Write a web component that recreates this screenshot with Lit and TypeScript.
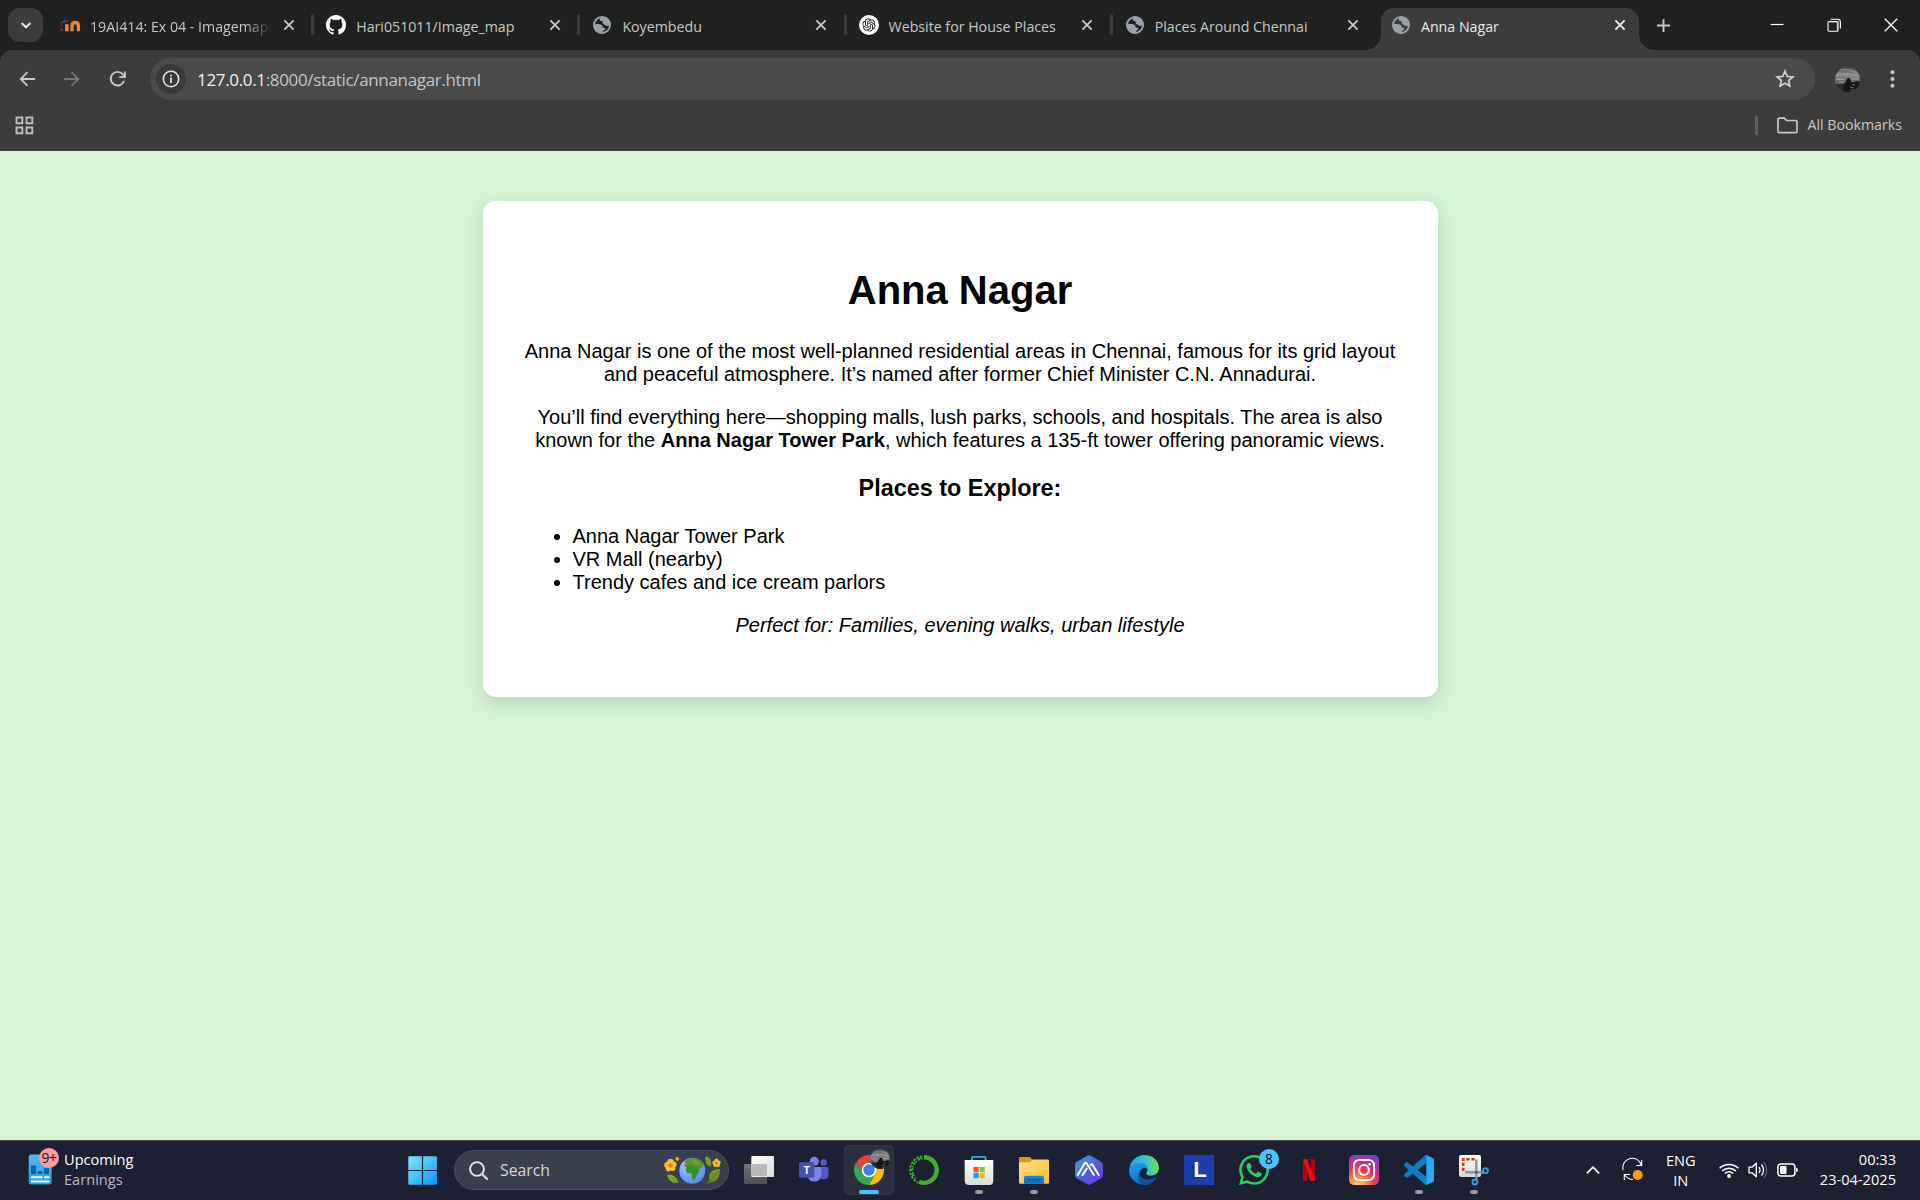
import { LitElement, html, css, svg, TemplateResult } from "lit";
import { customElement, property } from "lit/decorators.js";

const GITHUB =
  "M8 0C3.58 0 0 3.58 0 8c0 3.54 2.29 6.53 5.47 7.59.4.07.55-.17.55-.38 0-.19-.01-.82-.01-1.49-2.01.37-2.53-.49-2.69-.94-.09-.23-.48-.94-.82-1.13-.28-.15-.68-.52-.01-.53.63-.01 1.08.58 1.23.82.72 1.21 1.87.87 2.33.66.07-.52.28-.87.51-1.07-1.78-.2-3.64-.89-3.64-3.95 0-.87.31-1.59.82-2.15-.08-.2-.36-1.02.08-2.12 0 0 .67-.21 2.2.82.64-.18 1.32-.27 2-.27s1.36.09 2 .27c1.53-1.04 2.2-.82 2.2-.82.44 1.1.16 1.92.08 2.12.51.56.82 1.27.82 2.15 0 3.07-1.87 3.75-3.65 3.95.29.25.54.73.54 1.48 0 1.07-.01 1.93-.01 2.2 0 .21.15.46.55.38A8.01 8.01 0 0 0 16 8c0-4.42-3.58-8-8-8z";
const OPENAI =
  "M22.2819 9.8211a5.9847 5.9847 0 0 0-.5157-4.9108 6.0462 6.0462 0 0 0-6.5098-2.9A6.0651 6.0651 0 0 0 4.9807 4.1818a5.9847 5.9847 0 0 0-3.9977 2.9 6.0462 6.0462 0 0 0 .7427 7.0966 5.98 5.98 0 0 0 .511 4.9107 6.051 6.051 0 0 0 6.5146 2.9001A5.9847 5.9847 0 0 0 13.2599 24a6.0557 6.0557 0 0 0 5.7718-4.2058 5.9894 5.9894 0 0 0 3.9977-2.9001 6.0557 6.0557 0 0 0-.7475-7.0729zm-9.022 12.6081a4.4755 4.4755 0 0 1-2.8764-1.0408l.1419-.0804 4.7783-2.7582a.7948.7948 0 0 0 .3927-.6813v-6.7369l2.02 1.1686a.071.071 0 0 1 .038.052v5.5826a4.504 4.504 0 0 1-4.4945 4.4944zm-9.6607-4.1254a4.4708 4.4708 0 0 1-.5346-3.0137l.142.0852 4.783 2.7582a.7712.7712 0 0 0 .7806 0l5.8428-3.3685v2.3324a.0804.0804 0 0 1-.0332.0615L9.74 19.9502a4.4992 4.4992 0 0 1-6.1408-1.6464zM2.3408 7.8956a4.485 4.485 0 0 1 2.3655-1.9728V11.6a.7664.7664 0 0 0 .3879.6765l5.8144 3.3543-2.0201 1.1685a.0757.0757 0 0 1-.071 0l-4.8303-2.7865A4.504 4.504 0 0 1 2.3408 7.872zm16.5963 3.8558L13.1038 8.364 15.1192 7.2a.0757.0757 0 0 1 .071 0l4.8303 2.7913a4.4944 4.4944 0 0 1-.6765 8.1042v-5.6772a.79.79 0 0 0-.407-.667zm2.0107-3.0231l-.142-.0852-4.7735-2.7818a.7759.7759 0 0 0-.7854 0L9.409 9.2297V6.8974a.0662.0662 0 0 1 .0284-.0615l4.8303-2.7866a4.4992 4.4992 0 0 1 6.6802 4.66zM8.3065 12.863l-2.02-1.1638a.0804.0804 0 0 1-.038-.0567V6.0742a4.4992 4.4992 0 0 1 7.3757-3.4537l-.142.0805L8.704 5.459a.7948.7948 0 0 0-.3927.6813zm1.0976-2.3654l2.602-1.4998 2.6069 1.4998v2.9994l-2.5974 1.4997-2.6067-1.4997Z";
const WHATSAPP =
  "M17.472 14.382c-.297-.149-1.758-.867-2.03-.967-.273-.099-.471-.148-.67.15-.197.297-.767.966-.94 1.164-.173.199-.347.223-.644.075-.297-.15-1.255-.463-2.39-1.475-.883-.788-1.48-1.761-1.653-2.059-.173-.297-.018-.458.13-.606.134-.133.298-.347.446-.52.149-.174.198-.298.298-.497.099-.198.05-.371-.025-.52-.075-.149-.669-1.612-.916-2.207-.242-.579-.487-.5-.669-.51-.173-.008-.371-.01-.57-.01-.198 0-.52.074-.792.372-.272.297-1.04 1.016-1.04 2.479 0 1.462 1.065 2.875 1.213 3.074.149.198 2.096 3.2 5.077 4.487.709.306 1.262.489 1.694.625.712.227 1.36.195 1.871.118.571-.085 1.758-.719 2.006-1.413.248-.694.248-1.289.173-1.413-.074-.124-.272-.198-.57-.347m-5.421 7.403h-.004a9.87 9.87 0 01-5.031-1.378l-.361-.214-3.741.982.998-3.648-.235-.374a9.86 9.86 0 01-1.51-5.26c.001-5.45 4.436-9.884 9.888-9.884 2.64 0 5.122 1.03 6.988 2.898a9.825 9.825 0 012.893 6.994c-.003 5.45-4.437 9.884-9.885 9.884m8.413-18.297A11.815 11.815 0 0012.05 0C5.495 0 .16 5.335.157 11.892c0 2.096.547 4.142 1.588 5.945L.057 24l6.305-1.654a11.882 11.882 0 005.683 1.448h.005c6.554 0 11.89-5.335 11.893-11.893a11.821 11.821 0 00-3.48-8.413Z";
const VSCODE =
  "M23.15 2.587L18.21.21a1.494 1.494 0 0 0-1.705.29l-9.46 8.63-4.12-3.128a.999.999 0 0 0-1.276.057L.327 7.261A1 1 0 0 0 .326 8.74L3.899 12 .326 15.26a1 1 0 0 0 .001 1.479L1.65 17.94a.999.999 0 0 0 1.276.057l4.12-3.128 9.46 8.63a1.492 1.492 0 0 0 1.704.29l4.942-2.377A1.5 1.5 0 0 0 24 20.06V3.939a1.5 1.5 0 0 0-.85-1.352zm-5.146 14.861L10.826 12l7.178-5.448v10.896z";

const icon = (w: number, h: number, body: unknown, vb = `0 0 ${w} ${h}`) =>
  html`<svg width=${w} height=${h} viewBox=${vb} fill="none">${body}</svg>`;

/* ---------- favicons ---------- */
const favicons: Record<string, () => TemplateResult> = {
  moodle: () =>
    icon(20, 20, svg`
      <path d="M1.600 16v-2.500" stroke="#7a3f20" stroke-width="2.400"/>
      <path d="M6.800 16.300V9.200" stroke="#f08427" stroke-width="3.600"/>
      <path d="M12 16.300v-5.200q0-3.600 3.200-3.600t3.200 3.600v5.200" stroke="#f08427" stroke-width="3.300"/>
      <path d="M0 7.400 5.500 4.400 9.300 5.200 5.600 7.400 2 8.400z" fill="#4b4340"/>
      <path d="M1.400 8v4" stroke="#57463c" stroke-width=".9"/>`),
  github: () => icon(20, 20, svg`<path d=${GITHUB} fill="#fff"/>`, "0 0 16 16"),
  globe: () =>
    icon(20, 20, svg`
      <circle cx="10" cy="10" r="8" stroke="#9aa1a9" stroke-width="2"/>
      <path d="M9.500 2C8.300 2.700 7.600 3.600 7.700 4.700c.1.900 1 1.300 2 1.300.9 0 1 .7.9 1.500-.1.900.6 1.500 1.300 1.700 1 .4 1.300 1.500 2.600 1.500l4 .300C19 4.600 15.400 1 9.500 2z" fill="#9aa1a9"/>
      <path d="M1.500 8.900h4.800c2.200 0 4.200.8 4.200 2.600 0 1.100.9 1.300 2 1.500 1.200.2 1.300 1.200.3 1.800-1 .5-1.700.7-1.700 1.800v1.900C5.600 19 1 15.600 1.500 8.900z" fill="#9aa1a9"/>`),
  openai: () =>
    icon(20, 20, svg`<circle cx="10" cy="10" r="10" fill="#fff"/><g transform="translate(3.400 3.400) scale(.55)"><path d=${OPENAI} fill="#111"/></g>`),
};

/* ---------- taskbar app icons, drawn on a 30px grid ---------- */
const avatar = (size: number) =>
  icon(size, size, svg`
    <defs>
      <clipPath id="av"><circle cx="12.500" cy="12.500" r="12.500"/></clipPath>
      <linearGradient id="avg" x1="0" y1="0" x2="0" y2="1"><stop offset="0" stop-color="#4c4c4c"/><stop offset=".3" stop-color="#8b8b8b"/><stop offset=".55" stop-color="#6d6d6d"/><stop offset="1" stop-color="#2b2b2b"/></linearGradient>
    </defs>
    <g clip-path="url(#av)">
      <rect width="25" height="25" fill="url(#avg)"/>
      <path d="M0 4q6-3 13-1t12 2M1 8.500q8-3 14-1t10 0" stroke="#a9a9a9" stroke-width="1" opacity=".6"/>
      <path d="M2 12.500h7M15 12h8M4 15h5" stroke="#a5a5a5" stroke-width="1"/>
      <path d="M0 17h25v8H0z" fill="#2b2b2b"/>
      <path d="M9 25c-2-4-1-8 1-9 1-1 .8-2.500 2-4 .6-1.500 3-1.500 3.500 0 .6 1.300.5 2.600 1 3.500l6-1.500 3 1v10z" fill="#161616"/>
      <path d="M15 20l4 1M17 17.500l3 .5M15 23h4" stroke="#777" stroke-width=".8"/>
    </g>`, "0 0 25 25");

const apps: Record<string, () => TemplateResult> = {
  taskview: () =>
    icon(30, 30, svg`
      <defs><linearGradient id="tv" x1="0" y1="0" x2="1" y2="1"><stop offset="0" stop-color="#fff"/><stop offset="1" stop-color="#dcdcdc"/></linearGradient>
      <linearGradient id="tv2" x1="0" y1="0" x2="0" y2="1"><stop offset="0" stop-color="#747474"/><stop offset="1" stop-color="#505050"/></linearGradient></defs>
      <rect x="0" y="9" width="23" height="20" rx="1" fill="url(#tv2)"/>
      <rect x="7.300" y="1" width="22.700" height="21" rx="1" fill="url(#tv)"/>
      <path d="M7.300 9H22a1 1 0 0 1 1 1v11H7.300z" fill="#b9b9b9"/>`),
  teams: () =>
    icon(30, 30, svg`
      <circle cx="24.700" cy="7.400" r="3.200" fill="#5059c9"/>
      <path d="M20 12h8.500q1 0 1 1v6.500a4.800 4.800 0 0 1-9.500 1z" fill="#5059c9"/>
      <circle cx="15.300" cy="6.200" r="4.500" fill="#7b83eb"/>
      <path d="M8.500 12h12.300q1.400 0 1.400 1.400V21a7 7 0 0 1-13.700 0z" fill="#7b83eb"/>
      <rect x="0" y="7.300" width="15.300" height="15.400" rx="1.400" fill="#4650b8"/>
      <text x="7.650" y="19" font-size="11" font-weight="700" text-anchor="middle" fill="#fff" font-family="Open Sans, sans-serif">T</text>`),
  chrome: () =>
    icon(30, 30, svg`
      <path d="M2 7.500A15 15 0 0 0 15 30l6.500-11.300L15 15 8.500 18.700z" fill="#34a853"/>
      <path d="M28 7.500A15 15 0 0 1 15 30l6.500-11.200L21 7.500z" fill="#fbbc05"/>
      <path d="M15 7.500h13q-6-8-13-7.500Q7 0 2 7.500l6.500 11.200z" fill="#e94134"/>
      <circle cx="15" cy="15" r="7.300" fill="#fff"/>
      <circle cx="15" cy="15" r="5.700" fill="#3b7ded"/>`),
  anaconda: () =>
    icon(30, 30, svg`
      <path d="M15 2.200a12.800 12.800 0 1 1-5 24.600" stroke="#43b02a" stroke-width="4.400"/>
      <path d="M13.500 1.300A13.800 13.800 0 0 0 9 27.500" stroke="#43b02a" stroke-width="1.800" stroke-dasharray="2.600 1.200"/>
      <path d="M13.500 3.800A11.400 11.400 0 0 0 8 24.200" stroke="#43b02a" stroke-width="1.600" stroke-dasharray="1.400 1.600"/>
      <path d="M9 5.200l3-2.600M4.500 9.500l2-2.500M2 15.500l2-2.500M3.500 21l1-3" stroke="#43b02a" stroke-width="1.500"/>`),
  store: () =>
    icon(30, 30, svg`
      <defs><linearGradient id="st" x1="0" y1="0" x2="0" y2="1"><stop offset="0" stop-color="#fff"/><stop offset="1" stop-color="#dadada"/></linearGradient></defs>
      <path d="M8 6V2.800Q8 1.800 9 1.800h11.600q1 0 1 1V6" stroke="#27b0ea" stroke-width="1.800"/>
      <path d="M.7 5h28.600v20.800q0 4.200-4.200 4.200H4.900Q.7 30 .7 25.800z" fill="url(#st)"/>
      <path d="M9.500 12h5.200v5.200H9.500z" fill="#f1511b"/><path d="M15.600 12h5.200v5.200h-5.200z" fill="#80cc28"/>
      <path d="M9.500 18h5.200v5.200H9.500z" fill="#00adef"/><path d="M15.600 18h5.200v5.200h-5.200z" fill="#fbbc09"/>`),
  explorer: () =>
    icon(30, 30, svg`
      <defs><linearGradient id="fo" x1="0" y1="0" x2="1" y2="1"><stop offset="0" stop-color="#ffe08a"/><stop offset="1" stop-color="#fdbb2d"/></linearGradient>
      <linearGradient id="fo2" x1="0" y1="0" x2="0" y2="1"><stop offset="0" stop-color="#1a8ad8"/><stop offset="1" stop-color="#0a6bb8"/></linearGradient></defs>
      <path d="M0 3.200Q0 2 1.200 2h9q.8 0 1.400.6l1.600 1.800H28.800q1.200 0 1.200 1.200V12H0z" fill="#dc9a08"/>
      <path d="M0 7.200h11l2.500-2.400h15.300Q30 4.800 30 6v21.500q0 1.200-1.200 1.200H1.200Q0 28.700 0 27.500z" fill="url(#fo)"/>
      <path d="M5 28.700v-6q0-1.900 1.900-1.900h16.200q1.900 0 1.900 1.900v6z" fill="url(#fo2)"/>
      <path d="M8.500 24.700h13.500" stroke="#0b4f8d" stroke-width="1"/>`),
  hex: () =>
    icon(30, 30, svg`
      <defs><linearGradient id="hx" x1="0" y1="0" x2="1" y2="1"><stop offset="0" stop-color="#3fa7dd"/><stop offset=".5" stop-color="#4a63dc"/><stop offset="1" stop-color="#7a2cf0"/></linearGradient></defs>
      <path d="M13.200 .8q1.800-1 3.600 0l10.400 6q1.800 1 1.800 3.100v10.200q0 2.100-1.800 3.100l-10.400 6q-1.800 1-3.600 0l-10.400-6Q1 22.200 1 20.100V9.900q0-2.100 1.800-3.100z" fill="url(#hx)"/>
      <path d="M4 20.500 10.800 9.200q1.200-1.700 2.400 0l7 11.300M8.800 20.500l4.300-6.500M17 10.500q1-1.300 2 0l6 10" stroke="#fff" stroke-width="2" stroke-linecap="round" stroke-linejoin="round" transform="translate(-.300 -.500)"/>`),
  edge: () =>
    icon(30, 30, svg`
      <defs><linearGradient id="e1" x1="0" y1=".3" x2="1" y2=".3"><stop offset="0" stop-color="#2aa6e0"/><stop offset=".55" stop-color="#35c1d4"/><stop offset="1" stop-color="#6fe04c"/></linearGradient>
      <linearGradient id="e2" x1="0" y1="0" x2=".5" y2="1"><stop offset="0" stop-color="#27a5e8"/><stop offset="1" stop-color="#0b67c4"/></linearGradient></defs>
      <path d="M.5 12.500C2 5 8 0 15.300 0 24 0 30 6.400 30 12.800c0 4.600-3.600 7.700-7.800 7.700-3.700 0-5-1.300-5-2.100 0-.7 1.300-1.500 1.300-3.900 0-4-4-6-8.300-6C6 8.500 2.500 10 .5 12.500z" fill="url(#e1)"/>
      <path d="M0 15C0 10.500 5 7.700 10 7.700c5.500 0 8.500 3.300 8.500 6.500-3-2.800-7.700-.6-7.700 4.800 0 6 5.500 10.500 10.500 9.500A15 15 0 0 1 0 15z" fill="url(#e2)"/>
      <path d="M10.800 17c-.5 6 5.200 8.200 10.200 7.300 3-.5 4.800-1.700 6.300-2.300.5-.2.700.3.400.8A15 15 0 0 1 15.500 30c-5-1-8.500-7.500-4.700-13z" fill="#1453a0"/>`),
  l: () =>
    icon(30, 30, svg`
      <rect width="30" height="30" fill="#1c3fae"/>
      <path d="M8.500 23.500V9l3-3v14h10L19.500 23.500z" fill="#143552" opacity=".8"/>
      <text x="9.300" y="21.700" font-size="22" font-weight="700" fill="#fff" font-family="Liberation Sans, sans-serif">L</text>`),
  whatsapp: () => icon(30, 30, svg`<path d=${WHATSAPP} fill="#25d366"/>`, "0 0 24 24"),
  netflix: () =>
    icon(30, 30, svg`
      <rect x="9" y="4.300" width="4.300" height="21.400" fill="#b1060f"/>
      <rect x="16.700" y="4.300" width="4.300" height="21.400" fill="#b1060f"/>
      <path d="M9 4.300h4.300L21 25.700h-4.300z" fill="#f20a17"/>`),
  instagram: () =>
    icon(30, 30, svg`
      <defs><radialGradient id="ig" cx=".28" cy="1.050" r="1.100"><stop offset="0" stop-color="#ffdc6b"/><stop offset=".25" stop-color="#fd9a3e"/><stop offset=".5" stop-color="#f0404f"/><stop offset=".75" stop-color="#c82e92"/><stop offset="1" stop-color="#7a3fc4"/></radialGradient></defs>
      <rect width="30" height="30" rx="5" fill="url(#ig)"/>
      <rect x="4.900" y="4.900" width="20.200" height="20.200" rx="5.500" stroke="#fff" stroke-width="2"/>
      <circle cx="15" cy="15" r="4.900" stroke="#fff" stroke-width="2"/>
      <circle cx="20.600" cy="9.200" r="1.300" fill="#fff"/>`),
  vscode: () =>
    icon(30, 30, svg`
      <path d=${VSCODE} fill="#0d7ec7"/>
      <path d="M18.004 6.552V.15l.206.060 4.940 2.377A1.500 1.500 0 0 1 24 3.939V20.060a1.500 1.500 0 0 1-.85 1.352l-4.942 2.377-.204.040z" fill="#29aaf2"/>`, "0 0 24 24"),
  snip: () =>
    icon(30, 30, svg`
      <defs><linearGradient id="sn" x1="0" y1="0" x2="0" y2="1"><stop offset="0" stop-color="#fff"/><stop offset="1" stop-color="#d8d8d8"/></linearGradient></defs>
      <rect width="22" height="22" rx="2" fill="url(#sn)"/>
      <path d="M4.200 16V4.200H17" stroke="#d83b01" stroke-width="2.600" stroke-dasharray="3.200 1.800"/>
      <path d="M17.300 4.500v19.500M6 17.300h18" stroke="#8c9399" stroke-width="2.400"/>
      <circle cx="17.300" cy="17.300" r="1.600" fill="#5c6670"/>
      <circle cx="26.500" cy="15.700" r="2.500" stroke="#2b9fe6" stroke-width="1.800"/>
      <circle cx="15.900" cy="27" r="2.500" stroke="#2b9fe6" stroke-width="1.800"/>
      <path d="M22 17.500l2.500-.6M17.200 22.500l-.4 2.300" stroke="#2b9fe6" stroke-width="2"/>`),
};

const closeX = () =>
  icon(12, 12, svg`<path d="M1.400 1.400l9.200 9.200M10.600 1.400 1.400 10.600" stroke="currentColor" stroke-width="1.900"/>`);

const base = css`
  :host { display: block; font-family: "Open Sans", "Noto Sans", sans-serif; }
  * { box-sizing: border-box; }
  svg { display: block; flex: none; overflow: visible; }
`;

@customElement("browser-tab")
class BrowserTab extends LitElement {
  @property() name = "";
  @property() favicon = "globe";
  @property({ type: Boolean, reflect: true }) active = false;
  @property({ type: Boolean, reflect: true }) divider = false;
  @property({ type: Boolean, reflect: true }) fade = false;

  static styles = [base, css`
    :host { width: 266.200px; height: 50px; flex: none; padding: 8px 4px 0; position: relative; color: #c7c7c7; }
    .tab { display: flex; align-items: center; height: 42px; padding: 0 13.500px 8px 10px; }
    .title { flex: 1; margin: 1px 11px 0 10px; overflow: hidden; white-space: nowrap; font-size: 14.200px; line-height: 23px; padding-top: 1px; }
    :host([fade]) .title { -webkit-mask-image: linear-gradient(90deg, #000 85%, transparent 100%); }
    :host([divider])::after { content: ""; position: absolute; right: -2px; top: 14px; width: 3px; height: 21px; border-radius: 2px; background: #3c3c3c; }
    :host([active]) { color: #e9e9e9; }
    :host([active]) .tab { background: #3c3c3c; border-radius: 13px 13px 0 0; position: relative; }
    :host([active]) .tab::before, :host([active]) .tab::after { content: ""; position: absolute; bottom: 0; width: 15px; height: 15px; }
    :host([active]) .tab::before { left: -15px; background: radial-gradient(circle at 0 0, transparent 14.500px, #3c3c3c 15px); }
    :host([active]) .tab::after { right: -15px; background: radial-gradient(circle at 100% 0, transparent 14.500px, #3c3c3c 15px); }
  `];

  render() {
    return html`<div class="tab">${favicons[this.favicon]()}<span class="title">${this.name}</span>${closeX()}</div>`;
  }
}

@customElement("browser-chrome")
class BrowserChrome extends LitElement {
  static styles = [base, css`
    .strip { height: 50px; background: #1f2120; display: flex; }
    .menu { width: 35px; height: 34px; margin: 8px 3px 0 8px; border-radius: 12px; background: #3c3c3c; display: flex; align-items: center; justify-content: center; }
    .plus { margin: 18.500px 0 0 14px; }
    .controls { margin-left: auto; display: flex; height: 49px; align-items: center; padding-right: 1px; }
    .controls span { width: 57px; display: flex; justify-content: center; }
    .corner { background: #1f2120; }
    .bar { background: #3c3c3c; height: 101px; border-radius: 12px 12px 0 0; border-bottom: 1px solid #453f42; }
    .row1 { display: flex; align-items: center; height: 58px; padding: 0 21px 0 19px; }
    .nav { display: flex; gap: 29px; width: 131px; }
    .nav svg:last-child { margin-left: .500px; }
    .omni { width: 1665px; height: 42px; border-radius: 21px; background: #4a4a4a; display: flex; align-items: center; padding: 0 20px 0 6px; }
    .info { width: 30px; height: 30px; border-radius: 50%; background: #3a3a3a; display: flex; align-items: center; justify-content: center; margin-right: 11px; }
    .url { font-size: 17px; color: #c5c5c5; line-height: 26px; white-space: nowrap; flex: 1; letter-spacing: -.340px; padding-top: 1px; }
    .host { color: #f1f1f1; }
    .avatar { margin-left: 20px; }
    .dots { margin-left: auto; margin-right: 4px; }
    .row2 { display: flex; align-items: center; height: 34px; padding: 0 18px 0 15px; color: #c9c9c9; font-size: 14.200px; }
    .sep { margin-left: auto; width: 3px; height: 20px; border-radius: 2px; background: #5d5d5d; }
    .folder { margin: 0 9px 0 19px; }
    .all { margin-top: -2px; }
  `];

  private tabs = [
    { name: "19AI414: Ex 04 - Imagemaps", favicon: "moodle", divider: true, fade: true },
    { name: "Hari051011/Image_map", favicon: "github", divider: true },
    { name: "Koyembedu", favicon: "globe", divider: true },
    { name: "Website for House Places", favicon: "openai", divider: true },
    { name: "Places Around Chennai", favicon: "globe" },
    { name: "Anna Nagar", favicon: "globe", active: true },
  ] as { name: string; favicon: string; divider?: boolean; fade?: boolean; active?: boolean }[];

  render() {
    return html`
      <div class="strip">
        <div class="menu">${icon(12, 12, svg`<path d="M1.500 4l4.500 4.300L10.500 4" stroke="#e3e3e3" stroke-width="2.200"/>`)}</div>
        ${this.tabs.map((t) => html`<browser-tab .name=${t.name} .favicon=${t.favicon} ?active=${t.active} ?divider=${t.divider} ?fade=${t.fade}></browser-tab>`)}
        <div class="plus">${icon(13, 13, svg`<path d="M6.500 0v13M0 6.500h13" stroke="#c7c7c7" stroke-width="1.900"/>`)}</div>
        <div class="controls">
          <span>${icon(14, 14, svg`<path d="M.500 6.500h13" stroke="#fff" stroke-width="1.200"/>`)}</span>
          <span>${icon(14, 14, svg`<path d="M2 4h8.500v8.500" stroke="#858585" stroke-width="1.600"/><rect x="1" y="3.500" width="10" height="9.700" rx="1" stroke="#fff" stroke-width="1.100"/><path d="M3.500 1.200h7q2.900 0 2.900 2.800v6.500" stroke="#fff" stroke-width="1.100"/>`)}</span>
          <span>${icon(14, 14, svg`<path d="M.800.800l12.400 12.400M13.200.800.800 13.200" stroke="#fff" stroke-width="1.300"/>`)}</span>
        </div>
      </div>
      <div class="corner"><div class="bar">
        <div class="row1">
          <div class="nav">
            ${icon(16, 16, svg`<path d="M16 8H2M8.500 1.200 1.700 8l6.800 6.800" stroke="#c7c7c7" stroke-width="1.800"/>`)}
            ${icon(16, 16, svg`<path d="M0 8h14M7.500 1.200 14.300 8l-6.800 6.800" stroke="#757575" stroke-width="1.800"/>`)}
            ${icon(16, 16, svg`<path d="M14 9.800A6.800 6.800 0 1 1 12.800 3.400L14.700 5.500M14.900.500v5.600H9.300" stroke="#c7c7c7" stroke-width="1.900"/>`)}
          </div>
          <div class="omni">
            <div class="info">${icon(18, 18, svg`<circle cx="9" cy="9" r="7.700" stroke="#e3e3e3" stroke-width="1.600"/><path d="M9 7.800v5.200M9 4.800v1.800" stroke="#e3e3e3" stroke-width="1.800"/>`)}</div>
            <div class="url"><span class="host">127.0.0.1</span>:8000/static/annanagar.html</div>
            ${icon(20, 20, svg`<path d="M10 2.200l2.250 5.200 5.600.5-4.250 3.700 1.270 5.500L10 14.200l-4.870 2.900 1.270-5.500L2.150 7.900l5.600-.5z" stroke="#d0d0d0" stroke-width="1.700"/>`)}
          </div>
          <div class="avatar">${avatar(25)}</div>
          <div class="dots">${icon(5, 18, svg`<circle cx="2.500" cy="2.200" r="2" fill="#c7c7c7"/><circle cx="2.500" cy="9" r="2" fill="#c7c7c7"/><circle cx="2.500" cy="15.800" r="2" fill="#c7c7c7"/>`)}</div>
        </div>
        <div class="row2">
          ${icon(19, 19, svg`<g stroke="#c0bfc4" stroke-width="1.900"><rect x="1.500" y="1.500" width="5.800" height="5.800"/><rect x="11.500" y="1.500" width="5.800" height="5.800"/><rect x="1.500" y="11.500" width="5.800" height="5.800"/><rect x="11.500" y="11.500" width="5.800" height="5.800"/></g>`)}
          <div class="sep"></div>
          <div class="folder">${icon(21, 17, svg`<path d="M1 2.500Q1 1.200 2.300 1.200H7.300L9.600 3.500h9q1.400 0 1.400 1.400v9.400q0 1.400-1.400 1.400H2.400Q1 15.700 1 14.300z" stroke="#c7c7c7" stroke-width="1.700"/>`)}</div>
          <span class="all">All Bookmarks</span>
        </div>
      </div></div>`;
  }
}

@customElement("task-bar")
class TaskBar extends LitElement {
  static styles = [base, css`
    .bar { height: 60px; background: #1c2032; box-shadow: inset 0 1px #3b4a50; display: flex; align-items: center; color: #fff; font-size: 14.600px; }
    .widget { width: 397px; padding-left: 28px; display: flex; align-items: center; }
    .wicon { position: relative; margin-right: 12px; }
    .badge { position: absolute; border-radius: 50%; width: 20px; height: 20px; color: #111; font-size: 13.800px; line-height: 19px; text-align: center; }
    .pink { background: #ff99a4; left: 11px; top: -7px; letter-spacing: -.500px; }
    .blue { background: #4cc2ff; right: 0; top: 4px; }
    .lines { line-height: 20px; white-space: nowrap; margin-top: -2px; }
    .sub { color: #b9bbc2; }
    .search { width: 275px; height: 40px; border-radius: 20px; background: #3a3f4f; border: 1px solid #4b5060; display: flex; align-items: center; margin: 0 5px 0 7px; padding: 0 8px 0 14px; font-size: 15.800px; color: #d6d8dd; }
    .search span { flex: 1; margin-left: 12px; }
    .cell { width: 50px; height: 50px; display: flex; align-items: center; justify-content: center; position: relative; border-radius: 5px; }
    .apps { display: flex; gap: 5px; }
    .focused { background: #2b3040; box-shadow: inset 0 0 0 1px #343947; }
    .cell i { position: absolute; bottom: 1px; width: 8px; height: 4px; border-radius: 2px; background: #9498a3; }
    .focused i { width: 20px; background: #4cc2ff; }
    .profile { position: absolute; right: 4px; top: 4px; }
    .tray { margin-left: auto; display: flex; align-items: center; padding-right: 24px; }
    .lang { text-align: center; width: 40px; margin: -1px 18px 0 17px; }
    .sync { margin-left: 22px; }
    .status { display: flex; align-items: center; gap: 9px; }
    .clock { text-align: right; margin-left: 22px; }
  `];

  private items = [
    { id: "taskview" }, { id: "teams" }, { id: "chrome", focused: true }, { id: "anaconda" },
    { id: "store", open: true }, { id: "explorer", open: true }, { id: "hex" }, { id: "edge" }, { id: "l" },
    { id: "whatsapp", badge: "8" }, { id: "netflix" }, { id: "instagram" },
    { id: "vscode", open: true }, { id: "snip", open: true },
  ] as { id: string; focused?: boolean; open?: boolean; badge?: string }[];

  private art() {
    return icon(56, 30, svg`
      <defs><radialGradient id="gl" cx=".35" cy=".3" r=".8"><stop offset="0" stop-color="#a9c8ff"/><stop offset="1" stop-color="#4c86ea"/></radialGradient>
      <linearGradient id="lf" x1="0" y1="0" x2="1" y2="1"><stop offset="0" stop-color="#a3c63a"/><stop offset="1" stop-color="#5c8a12"/></linearGradient></defs>
      <circle cx="28.300" cy="15.800" r="13" fill="url(#gl)"/>
      <path d="M19.500 7.500C22 4 26 2.800 29 2.900c5 0 8.500 2.300 10.800 6.400l-.8 3.200-2.500.5-1.500 3.500-2-2.500-4.500-2.500-3 1-4.500-.5-1-2 2.500-1.500z" fill="#58922b"/>
      <path d="M23 11.500l5.500-.5 5 2.500 2 3-2.500 3-1.500 3.500-2 2.500-1.500-3-.5-4-4.500-.5-1.500-3z" fill="#2f8f2a"/>
      <path d="M28 3.500l5 1.500 3 4-5 1-3-2z" fill="#7a9a38"/>
      <path d="M41.500 1.500c5 1 6.500 5 5.500 10.500-4-1-6-5-5.500-10.500zM56 14c-7-.5-12.500 4-10.500 11.500l-4 3.500 5.500-2c5.500.5 9-5 9-13zM3.500 19.500c6 0 10 3 11 8.500-6.500.5-10.500-2.500-11-8.500z" fill="url(#lf)"/>
      <path d="M43 4l4 8.500M54.500 16l-9.500 11M6 21.500l8 6.300" stroke="#5b7d12" stroke-width=".8"/>
      <g fill="#fbc02d"><circle cx="6.500" cy="6.900" r="3.200"/><circle cx="3.200" cy="10" r="3"/><circle cx="9.600" cy="9.400" r="3"/><circle cx="4.500" cy="13.600" r="2.800"/><circle cx="8.600" cy="13.200" r="2.800"/></g>
      <circle cx="6.400" cy="10.400" r="2.200" fill="#f0713a"/>
      <circle cx="13.300" cy="3.900" r="1.900" fill="#f5a623"/>
      <g fill="#fbc02d"><circle cx="52.500" cy="5.500" r="2"/><circle cx="50.300" cy="7.700" r="2"/><circle cx="54.700" cy="7.500" r="2"/><circle cx="51.300" cy="10" r="2"/><circle cx="54" cy="10" r="2"/></g>
      <circle cx="52.500" cy="8" r="1.600" fill="#f0713a"/>`);
  }

  render() {
    return html`<div class="bar">
      <div class="widget">
        <div class="wicon">
          ${icon(24, 30, svg`
            <defs><linearGradient id="wd" x1="0" y1="0" x2="0" y2="1"><stop offset="0" stop-color="#55b8f4"/><stop offset="1" stop-color="#1f9fe4"/></linearGradient></defs>
            <rect x=".700" y="-.500" width="23" height="30" rx="2.500" fill="url(#wd)"/>
            <path d="M3 10.500h5V19H3zM9.500 16h5v3h-5zM16 13h5v6h-5z" fill="#0b62b0"/>
            <path d="M3.800 22.300h10M17 22.300h3.500M3.800 26.500h16.700" stroke="#fff" stroke-width="2" stroke-linecap="round"/>`)}
          <span class="badge pink">9+</span>
        </div>
        <div class="lines"><div>Upcoming</div><div class="sub">Earnings</div></div>
      </div>
      <div class="cell">${icon(30, 30, svg`
        <defs><linearGradient id="wn" x1="0" y1="0" x2="30" y2="30" gradientUnits="userSpaceOnUse"><stop offset="0" stop-color="#8be2ff"/><stop offset=".5" stop-color="#41c4fb"/><stop offset="1" stop-color="#0690fb"/></linearGradient></defs>
        <path transform="translate(.600 .500)" d="M2 .700h12.300v13.700H.700V2Q.700.700 2 .700zM15.500.700H28Q29.300.700 29.300 2v12.400H15.500zM.700 15.600h13.600v13.700H2Q.700 29.300.700 28zM15.500 15.600h13.800V28q0 1.300-1.300 1.300H15.500z" fill="url(#wn)"/>`)}</div>
      <div class="search">
        ${icon(19, 19, svg`<circle cx="8" cy="8" r="6.900" stroke="#e8e8ea" stroke-width="1.900"/><path d="M13 13l5 5" stroke="#d5d6da" stroke-width="2.300" stroke-linecap="round"/>`)}
        <span>Search</span>${this.art()}
      </div>
      <div class="apps">
        ${this.items.map((a) => html`<div class="cell ${a.focused ? "focused" : ""}">
          ${apps[a.id]()}
          ${a.focused ? html`<div class="profile">${avatar(20)}</div>` : ""}
          ${a.badge ? html`<span class="badge blue">${a.badge}</span>` : ""}
          ${a.open || a.focused ? html`<i></i>` : ""}
        </div>`)}
      </div>
      <div class="tray">
        ${icon(14, 8, svg`<path d="M.800 7.300 7 1.200l6.200 6.100" stroke="#fff" stroke-width="1.700"/>`)}
        <div class="sync">${icon(22, 22, svg`<path d="M1 11A9.300 9.300 0 0 1 19.500 6.500M19.700 1v5.500h-5.500M11 20.500Q6 20.500 2.500 15.700M2.300 21v-5.500H8" stroke="#fff" stroke-width="1.100"/><circle cx="15.700" cy="16" r="5" fill="#ff9d0a"/>`)}</div>
        <div class="lines lang"><div>ENG</div><div>IN</div></div>
        <div class="status">
          ${icon(20, 16, svg`<g stroke="#fff" stroke-width="1.500"><path d="M.600 6.300a13.300 13.300 0 0 1 18.800 0"/><path d="M3.200 9a9.600 9.600 0 0 1 13.600 0"/><path d="M5.900 11.500a5.800 5.800 0 0 1 8.200 0"/></g><circle cx="10" cy="14" r="1.900" fill="#fff"/>`)}
          ${icon(20, 18, svg`<path d="M1 6.200h3L8.300 2.200v13.600L4 11.800H1z" stroke="#fff" stroke-width="1.300" stroke-linejoin="round"/><path d="M11 6q2 3 0 6M13.500 3.500q4 5.500 0 11" stroke="#fff" stroke-width="1.300"/><path d="M16 1.200q5.500 7.800 0 15.600" stroke="#5b5f6e" stroke-width="1.300"/>`)}
          ${icon(21, 14, svg`<rect x=".900" y=".900" width="17" height="12.200" rx="3" stroke="#fff" stroke-width="1.500"/><rect x="3" y="3" width="6.500" height="8" rx="1" fill="#fff"/><path d="M19 4.800q2 .3 2 2.200t-2 2.200z" fill="#fff"/>`)}
        </div>
        <div class="lines clock"><div>00:33</div><div>23-04-2025</div></div>
      </div>
    </div>`;
  }
}

@customElement("app-root")
class AppRoot extends LitElement {
  static styles = [base, css`
    :host { width: 1920px; height: 1200px; overflow: hidden; }
    .screen { display: flex; flex-direction: column; height: 1200px; }
    .page { flex: 1; background: #d5f5d5; font-family: "Liberation Sans", Arial, sans-serif; font-size: 20px; line-height: 23px; color: #000; text-align: center; padding-top: 50px; }
    .card { width: 955px; height: 496px; margin: 0 auto; background: #fff; border-radius: 12.500px; padding: 40px; box-shadow: 0 5px 18px rgba(0, 0, 0, .15); display: flow-root; }
    h1 { font-size: 40px; line-height: 45px; margin: 26.800px 0; }
    h3 { font-size: 23.400px; line-height: 27px; margin: 23.400px 0; }
    p { margin: 20px 0; }
    ul { text-align: left; margin: 20px 0; padding-left: 50px; }
  `];

  render() {
    return html`<div class="screen">
      <browser-chrome></browser-chrome>
      <main class="page">
        <div class="card">
          <h1>Anna Nagar</h1>
          <p>Anna Nagar is one of the most well-planned residential areas in Chennai, famous for its grid layout and peaceful atmosphere. It’s named after former Chief Minister C.N. Annadurai.</p>
          <p>You’ll find everything here—shopping malls, lush parks, schools, and hospitals. The area is also known for the <strong>Anna Nagar Tower Park</strong>, which features a 135-ft tower offering panoramic views.</p>
          <h3>Places to Explore:</h3>
          <ul><li>Anna Nagar Tower Park</li><li>VR Mall (nearby)</li><li>Trendy cafes and ice cream parlors</li></ul>
          <p><em>Perfect for: Families, evening walks, urban lifestyle</em></p>
        </div>
      </main>
      <task-bar></task-bar>
    </div>`;
  }
}
